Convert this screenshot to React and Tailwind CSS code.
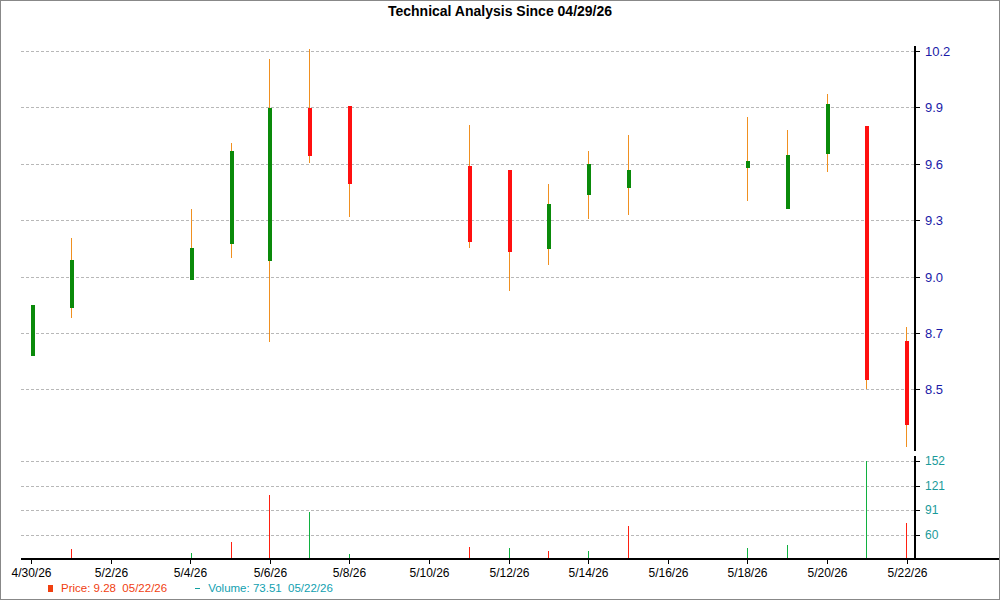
const F = { fontFamily: '"Liberation Sans", Arial, sans-serif' };

const candles = [
  [31, 355, 304, 304, 355, 'g'],
  [70, 307, 259, 237, 317, 'g'],
  [190, 279, 247, 208, 279, 'g'],
  [230, 243, 150, 142, 257, 'g'],
  [268, 260, 107, 58, 341, 'g'],
  [308, 107, 155, 48, 162, 'r'],
  [348, 105, 183, 105, 216, 'r'],
  [468, 165, 241, 124, 247, 'r'],
  [508, 169, 251, 169, 290, 'r'],
  [547, 248, 203, 183, 264, 'g'],
  [587, 194, 163, 150, 218, 'g'],
  [627, 187, 169, 134, 214, 'g'],
  [746, 167, 160, 116, 200, 'g'],
  [786, 208, 154, 129, 208, 'g'],
  [826, 153, 103, 93, 171, 'g'],
  [865, 125, 379, 125, 388, 'r'],
  [905, 340, 424, 326, 446, 'r'],
];

const vols = [
  [70, 548, 'r'], [190, 552, 'g'], [230, 541, 'r'], [268, 494, 'r'], [308, 511, 'g'],
  [348, 553, 'g'], [468, 546, 'r'], [508, 547, 'g'], [547, 550, 'r'], [587, 550, 'g'],
  [627, 525, 'r'], [746, 547, 'g'], [786, 544, 'g'], [865, 460, 'g'], [905, 522, 'r'],
];

const priceTicks = [[50, '10.2'], [106, '9.9'], [163, '9.6'], [219, '9.3'], [276, '9.0'], [332, '8.7'], [388, '8.5']];
const volTicks = [[460, '152'], [485, '121'], [509, '91'], [534, '60']];
const dates = ['4/30/26', '5/2/26', '5/4/26', '5/6/26', '5/8/26', '5/10/26', '5/12/26', '5/14/26', '5/16/26', '5/18/26', '5/20/26', '5/22/26'];

function Chart() {
  return (
    <svg width="1000" height="556" viewBox="0 22 1000 556" style={F} shapeRendering="crispEdges">
      {[...priceTicks, ...volTicks].map(([y]) => (
        <line key={y} x1="20" x2="914" y1={y + 0.5} y2={y + 0.5} stroke="#b8b8b8" strokeDasharray="3 2" />
      ))}
      <line x1="914" x2="914" y1="45" y2="450" stroke="#000" strokeWidth="2" />
      <line x1="914" x2="914" y1="455" y2="557" stroke="#000" strokeWidth="2" />
      {priceTicks.map(([y, t]) => (
        <g key={t}>
          <line x1="914" x2="919" y1={y + 0.5} y2={y + 0.5} stroke="#000" />
          <text x="924" y={y + 5} fontSize="13" fill="#1a1aa8" shapeRendering="auto">{t}</text>
        </g>
      ))}
      {volTicks.map(([y, t]) => (
        <g key={t}>
          <line x1="914" x2="919" y1={y + 0.5} y2={y + 0.5} stroke="#000" />
          <text x="924" y={y + 4} fontSize="12" fill="#1a9a9a">{t}</text>
        </g>
      ))}
      {candles.map(([x, o, c, h, l, k]) => (
        <g key={x}>
          <line x1={x + 0.5} x2={x + 0.5} y1={h} y2={l} stroke="#f09020" />
          <rect x={x - 1} y={Math.min(o, c)} width="4" height={Math.abs(o - c)} fill={k === 'g' ? '#0a8a0a' : '#ff1010'} />
        </g>
      ))}
      {vols.map(([x, y, k]) => (
        <line key={x} x1={x + 0.5} x2={x + 0.5} y1={y} y2="557" stroke={k === 'g' ? '#10b040' : '#ff2010'} />
      ))}
      <line x1="20" x2="1000" y1="557.5" y2="557.5" stroke="#000" strokeWidth="2" />
      {dates.map((d, i) => {
        const x = Math.round(30 + i * 79.6) + 0.5;
        return (
          <g key={d}>
            <line x1={x} x2={x} y1="557" y2="563" stroke="#000" />
            <text x={x} y="576" fontSize="12" textAnchor="middle" fill="#000">{d}</text>
          </g>
        );
      })}
    </svg>
  );
}

export default function App() {
  return (
    <div className="relative w-[1000px] h-[600px] bg-white border border-[#888] overflow-hidden" style={F}>
      <div className="h-[22px] text-center text-[14px] font-bold leading-[21px] text-black">
        Technical Analysis Since 04/29/26
      </div>
      <Chart />
      <div className="absolute left-[47px] top-[579px] flex items-center text-[11.5px]">
        <span className="w-[5px] h-[7px] bg-[#f04010] mr-[8px]" />
        <span className="text-[#f04010]">Price: 9.28&nbsp; 05/22/26</span>
        <span className="ml-[28px] w-[5px] h-[1px] bg-[#10a0a0] mr-[8px]" />
        <span className="text-[#10a0b0]">Volume: 73.51&nbsp; 05/22/26</span>
      </div>
    </div>
  );
}
